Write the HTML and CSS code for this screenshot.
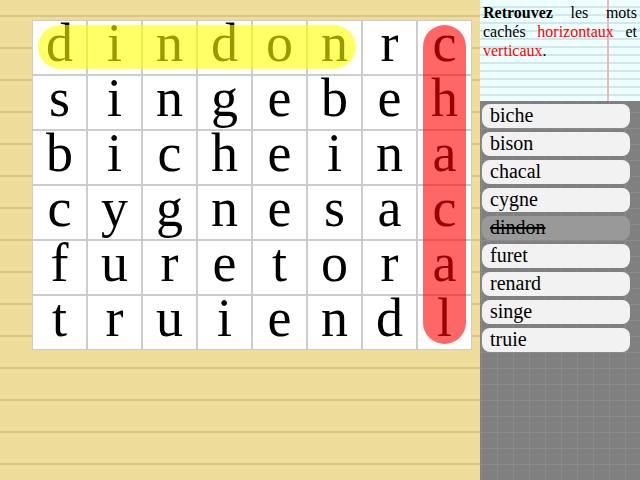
FILE: index.html
```html
<!DOCTYPE html>
<html lang="fr">
<head>
<meta charset="utf-8">
<title>Mots cachés</title>
<link rel="stylesheet" href="styles.css">
</head>
<body>
<div class="page">
  <main class="board">
    <div class="grid">
      <div class="cell">d</div><div class="cell">i</div><div class="cell">n</div><div class="cell">d</div><div class="cell">o</div><div class="cell">n</div><div class="cell">r</div><div class="cell">c</div>
      <div class="cell">s</div><div class="cell">i</div><div class="cell">n</div><div class="cell">g</div><div class="cell">e</div><div class="cell">b</div><div class="cell">e</div><div class="cell">h</div>
      <div class="cell">b</div><div class="cell">i</div><div class="cell">c</div><div class="cell">h</div><div class="cell">e</div><div class="cell">i</div><div class="cell">n</div><div class="cell">a</div>
      <div class="cell">c</div><div class="cell">y</div><div class="cell">g</div><div class="cell">n</div><div class="cell">e</div><div class="cell">s</div><div class="cell">a</div><div class="cell">c</div>
      <div class="cell">f</div><div class="cell">u</div><div class="cell">r</div><div class="cell">e</div><div class="cell">t</div><div class="cell">o</div><div class="cell">r</div><div class="cell">a</div>
      <div class="cell">t</div><div class="cell">r</div><div class="cell">u</div><div class="cell">i</div><div class="cell">e</div><div class="cell">n</div><div class="cell">d</div><div class="cell">l</div>
      <div class="mark mark-h"></div>
      <div class="mark mark-v"></div>
    </div>
  </main>
  <aside class="side">
    <div class="paper">
      <p class="intro"><b>Retrouvez</b> les mots cachés <span class="red">horizontaux</span> et <span class="red">verticaux</span>.</p>
    </div>
    <ul class="words">
      <li class="word">biche</li>
      <li class="word">bison</li>
      <li class="word">chacal</li>
      <li class="word">cygne</li>
      <li class="word found">dindon</li>
      <li class="word">furet</li>
      <li class="word">renard</li>
      <li class="word">singe</li>
      <li class="word">truie</li>
    </ul>
  </aside>
</div>
</body>
</html>
```

FILE: styles.css
```css
html, body {
  margin: 0;
  padding: 0;
}
body {
  width: 640px;
  height: 480px;
  overflow: hidden;
  font-family: "Liberation Serif", "Times New Roman", serif;
  background-color: #eedc9a;
  background-image: repeating-linear-gradient(to bottom,
    transparent 0px, transparent 15px,
    #d7c58b 15px, #d7c58b 17px,
    transparent 17px, transparent 32px);
}
.page {
  display: flex;
  width: 640px;
  height: 480px;
}
.board {
  width: 480px;
  height: 480px;
  box-sizing: border-box;
  padding: 20px 0 0 32px;
}
.grid {
  position: relative;
  display: grid;
  grid-template-columns: repeat(8, 55px);
  grid-auto-rows: 55px;
  width: 440px;
}
.cell {
  box-sizing: border-box;
  border: 1px solid #cccccc;
  background: #ffffff;
  color: #000000;
  font-size: 54px;
  line-height: 45px;
  text-align: center;
}
.mark {
  position: absolute;
  border-radius: 22px;
}
.mark-h {
  left: 6px;
  top: 5px;
  width: 318px;
  height: 44px;
  background: rgba(255, 255, 0, 0.6);
}
.mark-v {
  left: 391px;
  top: 5px;
  width: 43px;
  height: 319px;
  background: rgba(255, 0, 0, 0.6);
}
.side {
  width: 160px;
  height: 480px;
  display: flex;
  flex-direction: column;
}
.paper {
  height: 101px;
  box-sizing: border-box;
  padding: 3px 3px 0 3px;
  background-color: #eeffff;
  background-image:
    linear-gradient(to right, transparent 127px, #f2b6b8 127px, #f2b6b8 129px, transparent 129px),
    repeating-linear-gradient(to bottom,
      transparent 0px, transparent 6px,
      #d0e8ea 6px, #d0e8ea 8px);
}
.intro {
  margin: 0;
  font-size: 16px;
  line-height: 19px;
  text-align: justify;
  color: #000000;
}
.red {
  color: #ff0000;
}
.words {
  flex: 1;
  margin: 0;
  padding: 3px 10px 0 2px;
  list-style: none;
  display: flex;
  flex-direction: column;
  gap: 4px;
  background-color: #808080;
  background-image:
    repeating-linear-gradient(to right, transparent 0px, transparent 1px, #8b8b8b 1px, #8b8b8b 2px, transparent 2px, transparent 16px),
    repeating-linear-gradient(to bottom, transparent 0px, transparent 11px, #8b8b8b 11px, #8b8b8b 12px, transparent 12px, transparent 16px);
}
.word {
  height: 24px;
  box-sizing: border-box;
  padding-left: 8px;
  border-radius: 8px;
  background: #f2f2f2;
  font-size: 20px;
  line-height: 23px;
  color: #000000;
}
.word.found {
  background: #999999;
  text-decoration: line-through;
}
```
